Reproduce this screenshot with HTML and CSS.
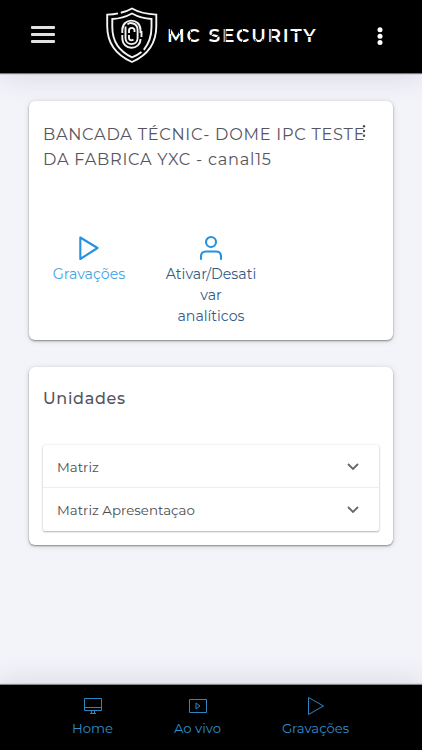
FILE: index.html
```html
<!DOCTYPE html>
<html lang="pt-BR">
<head>
    <meta charset="UTF-8">
    <meta name="viewport" content="width=device-width, initial-scale=1.0">
    <title>MC Security</title>
    <link rel="stylesheet" href="styles.css">
</head>
<body>
    <header class="topbar">
        <div class="hamburger"><span></span><span></span><span></span></div>

        <div class="brand">
            <!-- Shield with fingerprint -->
            <svg class="shield" width="54" height="58" viewBox="0 0 54 58">
                <path d="M13 7.300C9.500 8.200 5.500 8.500 2.200 8.600V20C2.200 37 11 49 27 56C43 49 51.300 37 51.300 20V8.600C43 8.200 34 6.500 27 2.500C23.500 4.500 19.500 6 15.800 6.800"/>
                <path d="M36.500 46C34 48 30.500 50 27 51.300C14.500 45.500 7.300 35 7.300 21V13C14 12.700 21 10.800 27 7.500C33 10.800 40 12.700 46.500 13V21C46.500 30 44 37.500 38.800 43.800"/>
                <path d="M17.300 27V24C17.300 11.500 35.500 11.500 35.500 24V26H36.500V31M17.300 29V32C17.300 44.800 35.500 44.800 35.500 33"/>
                <path d="M20.500 20.500V32C20.500 40.200 32.600 40.200 32.600 32V24C32.600 16.500 24.500 16 22.500 18.500"/>
                <path d="M24 27V24.500C24 21 29.500 21 29.500 24.500V26M24 29V31.500C24 35 27 34.500 28.500 33.500"/>
            </svg>
            <div class="wordmark">
                <span>MC SECURITY</span>
                <!-- Stencil cuts over the letters -->
                <svg class="cuts" width="150" height="16" viewBox="0 0 150 16">
                    <path d="M3.400 1V6M12.500 1V6M22 0L24 5M22 16L24 11M42 9L46 6M49 10L53 7M58.200 1V15M74.500 0L76.500 5M74.500 16L76.500 11M88 11L90 15M96 11L94 15M104.200 1V15M121 4.600H136M138 8.500H149"/>
                </svg>
            </div>
        </div>

        <svg class="more" width="6" height="18" viewBox="0 0 6 18">
            <circle cx="3" cy="2.800" r="2.500"/><circle cx="3" cy="9.200" r="2.500"/><circle cx="3" cy="15.500" r="2.500"/>
        </svg>
    </header>

    <main class="content">
        <section class="card camera">
            <h2 class="camera-title">BANCADA TÉCNIC- DOME IPC TESTE<br>DA FABRICA YXC - canal15</h2>
            <svg class="camera-menu" width="4" height="12" viewBox="0 0 4 12">
                <circle cx="2" cy="1.300" r="1.200"/><circle cx="2" cy="6" r="1.200"/><circle cx="2" cy="10.700" r="1.200"/>
            </svg>

            <div class="actions">
                <a class="action">
                    <svg width="24" height="26" viewBox="0 0 24 26"><path d="M3.300 2.500L20.500 13L3.300 24Z"/></svg>
                    <span>Gravações</span>
                </a>
                <a class="action dark">
                    <svg width="24" height="26" viewBox="0 0 24 26"><circle cx="12" cy="7" r="5"/><path d="M2 24V21.500Q2 16.500 7 16.500H17Q22 16.500 22 21.500V24"/></svg>
                    <span>Ativar/Desati<br>var<br>analíticos</span>
                </a>
            </div>
        </section>

        <section class="card units">
            <h2 class="units-title">Unidades</h2>
            <div class="accordion">
                <div class="row">
                    <span>Matriz</span>
                    <svg width="12" height="8" viewBox="0 0 12 8"><path d="M1 1L6 6L11 1"/></svg>
                </div>
                <div class="row">
                    <span>Matriz Apresentaçao</span>
                    <svg width="12" height="8" viewBox="0 0 12 8"><path d="M1 1L6 6L11 1"/></svg>
                </div>
            </div>
        </section>
    </main>

    <nav class="bottombar">
        <a class="tab">
            <svg width="20" height="20" viewBox="0 0 20 20"><path d="M1.500 2.500H18.500V14.500H1.500ZM1.500 11.500H18.500M8.500 14.500V17M11.500 14.500V17M7 17.500H13"/></svg>
            <span>Home</span>
        </a>
        <a class="tab">
            <svg width="20" height="20" viewBox="0 0 20 20"><path d="M1.500 3.500H18.500V16.500H1.500ZM8 7L12 10L8 13Z"/></svg>
            <span>Ao vivo</span>
        </a>
        <a class="tab">
            <svg width="20" height="20" viewBox="0 0 20 20"><path d="M2.500 1.500L17.500 10L2.500 18.500Z"/></svg>
            <span>Gravações</span>
        </a>
    </nav>
</body>
</html>
```
FILE: styles.css
```css
* {
    box-sizing: border-box;
}
body {
    margin: 0;
    height: 100vh;
    display: flex;
    flex-direction: column;
    overflow: hidden;
    background: #f3f4fa;
    font-family: Montserrat, Inter, "Open Sans", sans-serif;
    color: #555560;
}
svg {
    display: block;
    fill: none;
    flex: none;
}
h2 {
    margin: 0;
    font-weight: 400;
}

/* Top bar */
.topbar {
    height: 73px;
    flex: none;
    display: flex;
    align-items: flex-start;
    background: #000;
    box-shadow: 0 1px 1px #777, 0 6px 26px rgba(60, 60, 80, 0.12);
}
.hamburger {
    width: 24px;
    margin: 26px 0 0 31px;
    display: grid;
    gap: 4px;
}
.hamburger span {
    height: 3px;
    border-radius: 1px;
    background: #e2e2e2;
}
.brand {
    display: flex;
    margin: 6px 0 0 50px;
}
.shield {
    stroke: #f4f4f4;
    stroke-width: 1.9;
}
.wordmark {
    position: relative;
    margin: 18px 0 0 8px;
    width: 150px;
    font-size: 18.5px;
    line-height: 24px;
    font-weight: 600;
    letter-spacing: 1.8px;
    white-space: nowrap;
    color: #fff;
}
.cuts {
    position: absolute;
    left: 0;
    top: 4px;
    stroke: #000;
    stroke-width: 1;
}
.more {
    margin: 27px 0 0 60px;
    fill: #fff;
}

/* Cards */
.content {
    flex: 1;
    padding: 28px 29px 0;
}
.card {
    background: #fff;
    border-radius: 6px;
    box-shadow: 0 1px 2px rgba(0, 0, 0, 0.42), 0 1px 6px rgba(0, 0, 0, 0.12);
}
.camera {
    position: relative;
    height: 239px;
    padding: 21px 14px 0;
    margin-bottom: 27px;
}
.camera-title {
    font-size: 16.2px;
    line-height: 24.5px;
    letter-spacing: 0.74px;
    white-space: nowrap;
}
.camera-menu {
    position: absolute;
    left: 333px;
    top: 24px;
    fill: #4b4b5a;
}
.actions {
    display: flex;
    gap: 30px;
    margin-top: 64px;
}
.action {
    width: 92px;
    display: flex;
    flex-direction: column;
    align-items: center;
    font-size: 14.2px;
    line-height: 21px;
    text-align: center;
    color: #43a5e6;
}
.action svg {
    stroke: #2492e0;
    stroke-width: 2.1;
    stroke-linejoin: round;
    stroke-linecap: round;
    margin-bottom: 3px;
}
.dark span {
    color: #355a85;
    white-space: nowrap;
}
.units {
    height: 178px;
    padding: 20px 14px 0;
}
.units-title {
    font-size: 16px;
    line-height: 24px;
    font-weight: 500;
    letter-spacing: 0.7px;
}

/* Unit list */
.accordion {
    margin-top: 34px;
    border-radius: 2px;
    box-shadow: 0 1px 2px rgba(0, 0, 0, 0.28), 0 0 2px rgba(0, 0, 0, 0.12);
}
.row {
    height: 43px;
    padding: 0 20px 0 14px;
    display: flex;
    align-items: center;
    justify-content: space-between;
    font-size: 13.4px;
    color: #4c4c4c;
}
.row:first-child {
    padding-top: 2px;
    border-bottom: 1px solid #eee;
}
.row svg {
    stroke: #666;
    stroke-width: 1.8;
}

/* Bottom bar */
.bottombar {
    height: 65px;
    flex: none;
    display: flex;
    padding: 11px 20px 0 40px;
    background: #000;
    box-shadow: 0 -1px 1px #888, 0 -6px 26px rgba(60, 60, 80, 0.12);
}
.tab {
    width: 105px;
    display: flex;
    flex-direction: column;
    align-items: center;
    font-size: 13.2px;
    line-height: 20px;
    color: #2f8fce;
}
.tab:last-child {
    width: 131px;
}
.tab svg {
    stroke: #2b86c2;
    stroke-width: 1;
    margin-bottom: 2px;
}
```
